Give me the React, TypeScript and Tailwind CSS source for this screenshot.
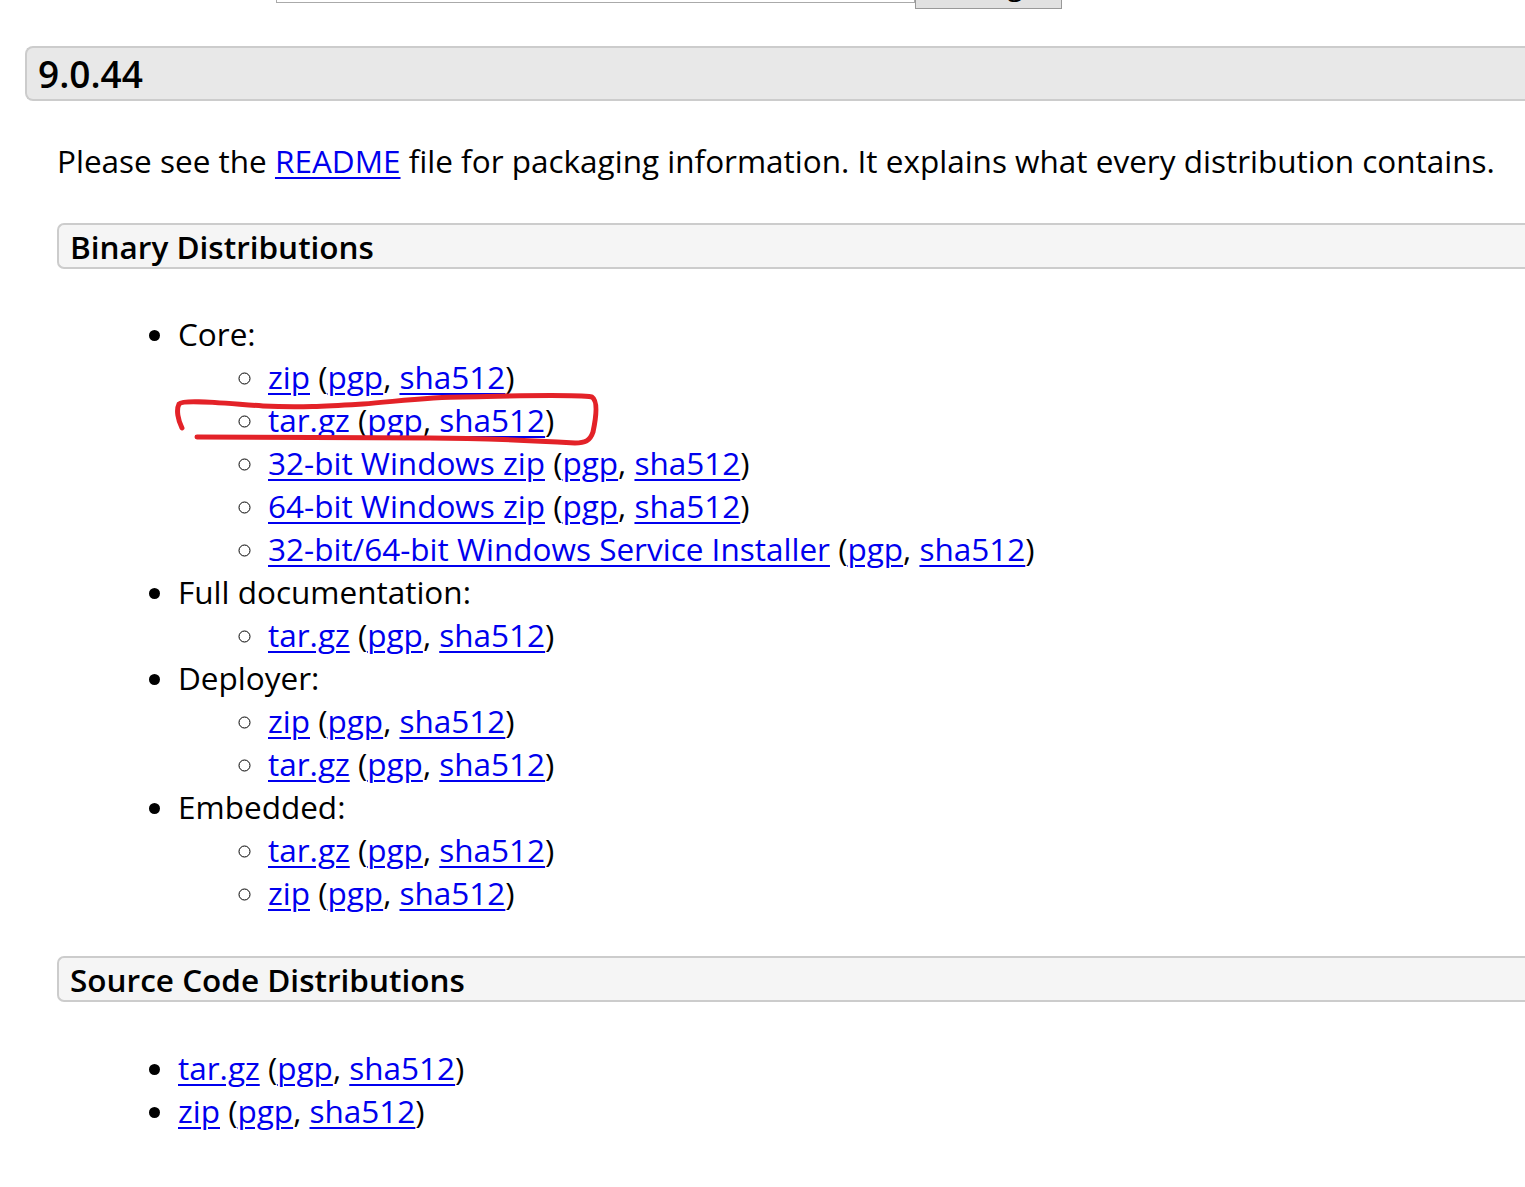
import React from 'react';

interface Download {
  label: string;
}

interface Group {
  title: string;
  items: Download[];
}

const binaryGroups: Group[] = [
  {
    title: 'Core:',
    items: [
      { label: 'zip' },
      { label: 'tar.gz' },
      { label: '32-bit Windows zip' },
      { label: '64-bit Windows zip' },
      { label: '32-bit/64-bit Windows Service Installer' },
    ],
  },
  { title: 'Full documentation:', items: [{ label: 'tar.gz' }] },
  { title: 'Deployer:', items: [{ label: 'zip' }, { label: 'tar.gz' }] },
  { title: 'Embedded:', items: [{ label: 'tar.gz' }, { label: 'zip' }] },
];

const sourceItems: Download[] = [{ label: 'tar.gz' }, { label: 'zip' }];

const linkClass = 'text-[#0000ee] underline underline-offset-[4px] decoration-[2px]';

const DownloadLine: React.FC<{ item: Download }> = ({ item }) => (
  <>
    <a href="#" className={linkClass}>{item.label}</a> (
    <a href="#" className={linkClass}>pgp</a>,{' '}
    <a href="#" className={linkClass}>sha512</a>)
  </>
);

const SectionBox: React.FC<{ title: string }> = ({ title }) => (
  <div className="ml-[57px] flex h-[46px] items-center rounded-l-[7px] border-2 border-r-0 border-[#cccccc] bg-[#f5f5f5] pl-[11px] text-[31.5px] font-semibold">
    {title}
  </div>
);

export default function App() {
  return (
    <div className="relative min-h-screen overflow-hidden bg-white font-['Open_Sans',sans-serif] text-[31.5px] leading-[43px] text-black">
      {/* mirror form, cut off by the top of the window */}
      <div className="-mt-[50px] flex items-start pl-[276px]">
        <div className="h-[53px] w-[639px] border border-[#aaaaaa] bg-white" />
        <button className="flex h-[59px] w-[147px] items-end justify-center border border-[#999999] bg-[#e1e1e1] pb-[9px] text-[28.8px] leading-none">
          Change
        </button>
      </div>

      <div className="ml-[25px] mt-[37px] flex h-[55px] items-center rounded-l-[8px] border-2 border-r-0 border-[#cccccc] bg-[#e8e8e8] pl-[11px] text-[37px] font-semibold">
        9.0.44
      </div>

      <p className="ml-[57px] mt-[38px]">
        Please see the <a href="#" className={linkClass}>README</a> file for packaging information. It explains what every distribution contains.
      </p>

      <div className="mt-[41px]">
        <SectionBox title="Binary Distributions" />
      </div>

      <ul className="ml-[57px] mt-[43px] list-disc pl-[121px]">
        {binaryGroups.map((group) => (
          <li key={group.title}>
            {group.title}
            <ul className="list-[circle] pl-[90px]">
              {group.items.map((item, i) => (
                <li key={i}>
                  <DownloadLine item={item} />
                </li>
              ))}
            </ul>
          </li>
        ))}
      </ul>

      <div className="mt-[42px]">
        <SectionBox title="Source Code Distributions" />
      </div>

      <ul className="ml-[57px] mt-[44px] list-disc pl-[121px] pb-[60px]">
        {sourceItems.map((item, i) => (
          <li key={i}>
            <DownloadLine item={item} />
          </li>
        ))}
      </ul>

      {/* hand-drawn red mark around the Core tar.gz line */}
      <svg
        className="pointer-events-none absolute left-0 top-0"
        width="1525"
        height="1187"
        viewBox="0 0 1525 1187"
        fill="none"
      >
        <path
          d="M182 428 C178 420 176 410 179 404 C184 399 220 403 263 406 C300 408 330 406 363 404 C400 401 430 397 463 397 C520 396 570 394 592 397 C598 401 596 418 593 432 C590 441 585 443 575 443 C540 441 480 438 430 438 C340 437 260 437 197 437"
          stroke="#e32228"
          strokeWidth="5"
          strokeLinecap="round"
          strokeLinejoin="round"
        />
      </svg>
    </div>
  );
}
